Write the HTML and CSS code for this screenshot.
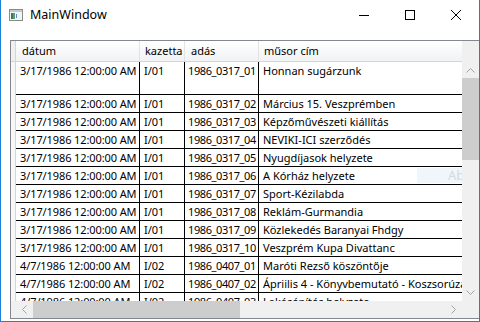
FILE: index.html
```html
<!DOCTYPE html>
<html lang="hu">
<head>
<meta charset="utf-8">
<title>MainWindow</title>
<link rel="stylesheet" href="styles.css">
</head>
<body>
<div class="window">
  <div class="titlebar">
    <svg class="app-icon" width="14" height="12" viewBox="0 0 14 12">
      <rect x="0.5" y="0.5" width="13" height="11" fill="#f4f4f4" stroke="#8a8a8a"/>
      <rect x="1" y="1" width="12" height="2" fill="#c9c9c9"/>
      <rect x="2" y="4" width="2" height="6" fill="#3c7a5a"/>
      <rect x="4" y="4" width="2" height="6" fill="#5a9c7a"/>
      <rect x="7" y="5" width="1" height="4" fill="#4a90d9"/>
    </svg>
    <span class="title">MainWindow</span>
    <div class="controls">
      <span class="ctl"><svg width="10" height="10" viewBox="0 0 10 10"><line x1="0" y1="5.5" x2="10" y2="5.5" stroke="#000" stroke-width="1"/></svg></span>
      <span class="ctl"><svg width="10" height="10" viewBox="0 0 10 10"><rect x="0.5" y="0.5" width="9" height="9" fill="none" stroke="#000" stroke-width="1"/></svg></span>
      <span class="ctl"><svg width="10" height="10" viewBox="0 0 10 10"><path d="M0 0L10 10M10 0L0 10" stroke="#000" stroke-width="1"/></svg></span>
    </div>
  </div>
  <div class="client">
    <div class="datagrid">
      <div class="content">
        <div class="hrow">
          <div class="hcell rh"></div>
          <div class="hcell c1">dátum</div>
          <div class="hcell c2">kazetta</div>
          <div class="hcell c3">adás</div>
          <div class="hcell c4">műsor cím</div>
        </div>
        <div class="row tall">
          <div class="rh"></div>
          <div class="cell c1">3/17/1986 12:00:00 AM</div>
          <div class="cell c2">I/01</div>
          <div class="cell c3">1986_0317_01</div>
          <div class="cell c4">Honnan sugárzunk</div>
        </div>
        <div class="row">
          <div class="rh"></div>
          <div class="cell c1">3/17/1986 12:00:00 AM</div>
          <div class="cell c2">I/01</div>
          <div class="cell c3">1986_0317_02</div>
          <div class="cell c4">Március 15. Veszprémben</div>
        </div>
        <div class="row">
          <div class="rh"></div>
          <div class="cell c1">3/17/1986 12:00:00 AM</div>
          <div class="cell c2">I/01</div>
          <div class="cell c3">1986_0317_03</div>
          <div class="cell c4">Képzőművészeti kiállítás</div>
        </div>
        <div class="row">
          <div class="rh"></div>
          <div class="cell c1">3/17/1986 12:00:00 AM</div>
          <div class="cell c2">I/01</div>
          <div class="cell c3">1986_0317_04</div>
          <div class="cell c4">NEVIKI-ICI szerződés</div>
        </div>
        <div class="row">
          <div class="rh"></div>
          <div class="cell c1">3/17/1986 12:00:00 AM</div>
          <div class="cell c2">I/01</div>
          <div class="cell c3">1986_0317_05</div>
          <div class="cell c4">Nyugdíjasok helyzete</div>
        </div>
        <div class="row">
          <div class="rh"></div>
          <div class="cell c1">3/17/1986 12:00:00 AM</div>
          <div class="cell c2">I/01</div>
          <div class="cell c3">1986_0317_06</div>
          <div class="cell c4">A Kórház helyzete</div>
        </div>
        <div class="row">
          <div class="rh"></div>
          <div class="cell c1">3/17/1986 12:00:00 AM</div>
          <div class="cell c2">I/01</div>
          <div class="cell c3">1986_0317_07</div>
          <div class="cell c4">Sport-Kézilabda</div>
        </div>
        <div class="row">
          <div class="rh"></div>
          <div class="cell c1">3/17/1986 12:00:00 AM</div>
          <div class="cell c2">I/01</div>
          <div class="cell c3">1986_0317_08</div>
          <div class="cell c4">Reklám-Gurmandia</div>
        </div>
        <div class="row">
          <div class="rh"></div>
          <div class="cell c1">3/17/1986 12:00:00 AM</div>
          <div class="cell c2">I/01</div>
          <div class="cell c3">1986_0317_09</div>
          <div class="cell c4">Közlekedés Baranyai Fhdgy</div>
        </div>
        <div class="row">
          <div class="rh"></div>
          <div class="cell c1">3/17/1986 12:00:00 AM</div>
          <div class="cell c2">I/01</div>
          <div class="cell c3">1986_0317_10</div>
          <div class="cell c4">Veszprém Kupa Divattanc</div>
        </div>
        <div class="row">
          <div class="rh"></div>
          <div class="cell c1">4/7/1986 12:00:00 AM</div>
          <div class="cell c2">I/02</div>
          <div class="cell c3">1986_0407_01</div>
          <div class="cell c4">Maróti Rezső köszöntője</div>
        </div>
        <div class="row">
          <div class="rh"></div>
          <div class="cell c1">4/7/1986 12:00:00 AM</div>
          <div class="cell c2">I/02</div>
          <div class="cell c3">1986_0407_02</div>
          <div class="cell c4">Ápriilis 4 - Könyvbemutató - Koszsorúzás</div>
        </div>
        <div class="row">
          <div class="rh"></div>
          <div class="cell c1">4/7/1986 12:00:00 AM</div>
          <div class="cell c2">I/02</div>
          <div class="cell c3">1986_0407_03</div>
          <div class="cell c4">Lakásépítés helyzete</div>
        </div>
        <div class="watermark">Ablakok aktiválása</div>
      </div>
      <div class="vscroll">
        <div class="corner-top"></div>
        <div class="arrow"><svg width="9" height="5" viewBox="0 0 9 5"><polyline points="0.5,4.5 4.5,0.5 8.5,4.5" fill="none" stroke="#a3a3a3"/></svg></div>
        <div class="track vtrack"><div class="vthumb"></div></div>
        <div class="arrow"><svg width="9" height="5" viewBox="0 0 9 5"><polyline points="0.5,0.5 4.5,4.5 8.5,0.5" fill="none" stroke="#a3a3a3"/></svg></div>
      </div>
      <div class="hscroll">
        <div class="hpad"></div>
        <div class="arrow"><svg width="5" height="9" viewBox="0 0 5 9"><polyline points="4.5,0.5 0.5,4.5 4.5,8.5" fill="none" stroke="#a3a3a3"/></svg></div>
        <div class="track htrack"><div class="hthumb"></div></div>
        <div class="arrow"><svg width="5" height="9" viewBox="0 0 5 9"><polyline points="0.5,0.5 4.5,4.5 0.5,8.5" fill="none" stroke="#a3a3a3"/></svg></div>
      </div>
      <div class="corner"></div>
    </div>
  </div>
</div>
</body>
</html>
```
FILE: styles.css
```css
html, body {
  margin: 0;
  padding: 0;
  background: #ffffff;
}
body {
  width: 480px;
  height: 322px;
  overflow: hidden;
}
.window {
  box-sizing: border-box;
  width: 480px;
  height: 322px;
  border-left: 1px solid #1a82d7;
  border-right: 1px solid #1a82d7;
  border-bottom: 1px solid #1a82d7;
  display: flex;
  flex-direction: column;
  background: #fff;
  font-family: "Noto Sans", "DejaVu Sans", sans-serif;
}
.titlebar {
  height: 31px;
  flex: none;
  display: flex;
  align-items: center;
  position: relative;
}
.app-icon {
  margin-left: 8px;
  margin-top: -1px;
  flex: none;
}
.title {
  margin-left: 7px;
  font-size: 12.5px;
  color: #000;
  margin-top: -2px;
}
.controls {
  margin-left: auto;
  display: flex;
  height: 31px;
}
.ctl {
  width: 46px;
  display: flex;
  align-items: center;
  justify-content: center;
  margin-top: -2px;
}
.client {
  flex: 1;
  padding: 9px 0 2px 9px;
  display: flex;
  min-height: 0;
}
.datagrid {
  flex: 1;
  border-left: 1px solid #828790;
  border-top: 1px solid #828790;
  border-bottom: 1px solid #828790;
  display: grid;
  grid-template-columns: 451px 17px;
  grid-template-rows: 260px 17px;
  background: #f0f0f0;
  font-size: 11px;
  color: #000;
}
.content {
  position: relative;
  overflow: hidden;
  background: #fff;
}
.hrow, .row {
  display: grid;
  grid-template-columns: 5px 124px 45px 74px 420px;
}
.hrow {
  height: 21px;
  box-sizing: border-box;
  border-bottom: 1px solid #d5d5d5;
  background: linear-gradient(#ffffff, #f1f2f4);
}
.hcell {
  box-sizing: border-box;
  border-right: 1px solid #e3e3e3;
  line-height: 19px;
  padding-left: 5px;
  white-space: nowrap;
  overflow: hidden;
}
.hcell.rh {
  padding: 0;
  background: #f0f0f0;
  border-right: 1px solid #d5d5d5;
}
.hcell.c1, .hcell.c3 { padding-left: 6px; }
.hcell.c4 { padding-left: 5px; border-right: none; }
.row {
  height: 18px;
}
.row.tall {
  height: 33px;
}
.row .rh {
  background: #f7f7f7;
  border-right: 1px solid #d5d5d5;
}
.cell {
  box-sizing: border-box;
  border-bottom: 1px solid #000;
  border-right: 1px solid #000;
  padding: 1px 0 0 4px;
  line-height: 16px;
  white-space: nowrap;
  overflow: hidden;
}
.cell.c1 { padding-left: 4px; letter-spacing: -0.1px; }
.cell.c3 { padding-left: 3px; letter-spacing: -0.4px; }
.cell.c4 { border-right: none; }
.watermark {
  position: absolute;
  left: 406px;
  top: 127px;
  width: 200px;
  height: 15px;
  box-sizing: border-box;
  padding-left: 31px;
  background: #f1f6fc;
  color: #d3dae2;
  font-size: 13px;
  line-height: 15px;
  white-space: nowrap;
}
.vscroll {
  display: flex;
  flex-direction: column;
  background: #f0f0f0;
}
.corner-top {
  height: 21px;
  flex: none;
  background: #f0f0f0;
}
.arrow {
  width: 17px;
  height: 17px;
  flex: none;
  display: flex;
  align-items: center;
  justify-content: center;
}
.track {
  flex: 1;
  position: relative;
}
.vthumb {
  position: absolute;
  left: 0;
  right: 0;
  top: -1px;
  height: 82px;
  background: #cdcdcd;
}
.hscroll {
  display: flex;
  background: #f0f0f0;
}
.hpad {
  width: 5px;
  flex: none;
}
.hthumb {
  position: absolute;
  top: 0;
  bottom: 0;
  left: 0;
  width: 207px;
  background: #cdcdcd;
}
.corner {
  background: #f0f0f0;
}
```
